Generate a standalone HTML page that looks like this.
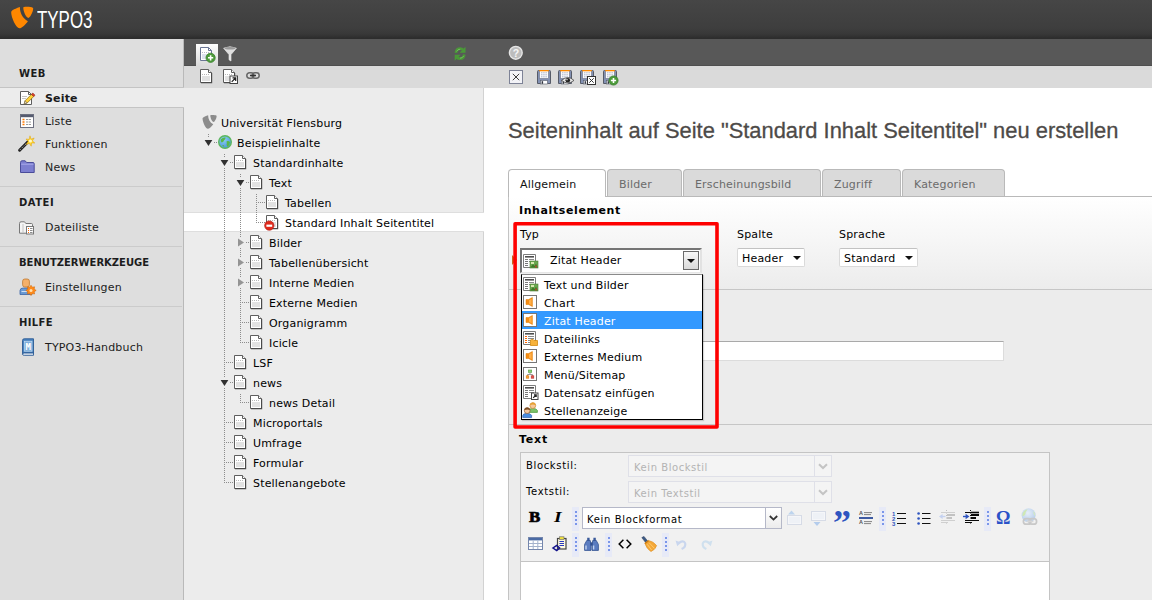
<!DOCTYPE html>
<html lang="de">
<head>
<meta charset="utf-8">
<title>TYPO3</title>
<style>
html,body{margin:0;padding:0;}
body{width:1152px;height:600px;overflow:hidden;position:relative;background:#ececec;font-family:"DejaVu Sans","Liberation Sans",sans-serif;font-size:11px;color:#000;letter-spacing:.17px;}
.abs{position:absolute;}
svg{overflow:visible;display:block;}
#topbar{left:0;top:0;width:1152px;height:39px;background:linear-gradient(#464646,#3e3e3e 28px,#383838 34px,#2d2d2d 38px);}
#logotxt{left:37px;top:5px;font-family:"Liberation Sans",sans-serif;font-size:23px;line-height:30px;color:#fff;transform:scaleX(.735);transform-origin:0 0;letter-spacing:0;}
#menu{left:0;top:39px;width:183px;height:561px;background:#dedede;border-right:1px solid #b9b9b9;}
.mh{left:19px;font-weight:bold;font-size:10px;line-height:12px;color:#1c1c1c;text-transform:uppercase;letter-spacing:.5px;}
.mi{left:45px;line-height:14px;color:#1c1c1c;white-space:nowrap;}
.sep{left:0;width:182px;height:1px;background:#cbcbcb;}
#seite{left:0;top:87px;width:184px;height:21px;background:#ececec;border-top:1px solid #c4c4c4;border-bottom:1px solid #c4c4c4;box-sizing:border-box;}
#dark{left:184px;top:39px;width:968px;height:27px;background:#585858;box-sizing:border-box;border-bottom:1px solid #4e4e4e;}
#light{left:184px;top:66px;width:968px;height:22px;background:#dadada;}
#tree{left:184px;top:88px;width:299px;height:512px;background:#ececec;border-right:1px solid #d2d2d2;}
.tr{white-space:nowrap;line-height:14px;color:#000;}
.vl{width:1px;background:repeating-linear-gradient(#8c8c8c 0 1px,transparent 1px 2px);}
.hl{height:1px;background:repeating-linear-gradient(90deg,#8c8c8c 0 1px,transparent 1px 2px);}
.ad{width:0;height:0;border-left:3.5px solid transparent;border-right:3.5px solid transparent;border-top:6px solid #2e2e2e;}
.ar{width:0;height:0;border-top:3.5px solid transparent;border-bottom:3.5px solid transparent;border-left:5.5px solid #8e8e8e;}
#content{left:484px;top:88px;width:668px;height:512px;background:#fff;}
#title{left:508px;top:116px;font-family:"Liberation Sans",sans-serif;font-size:22.8px;line-height:28px;color:#4d4a48;white-space:nowrap;letter-spacing:0;transform:scaleX(0.9599);transform-origin:0 0;-webkit-text-stroke:.3px #4d4a48;}
.tab{top:169px;height:27px;box-sizing:border-box;border:1px solid #b9b9b9;border-bottom:none;border-radius:4px 4px 0 0;background:#dadada;color:#6b6b6b;line-height:14px;padding:8px 0 0 11px;}
.tab.on{background:#fff;color:#111;height:28px;}
#panel{left:508px;top:196px;width:644px;height:404px;border-top:1px solid #b9b9b9;border-left:1px solid #c4c4c4;background:#ececec;box-sizing:border-box;}
#grad{left:509px;top:197px;width:643px;height:92px;background:linear-gradient(#fff,#ececec);border-bottom:1px solid #c6c6c6;}
.lbl{line-height:14px;color:#000;white-space:nowrap;}
.sel{top:248px;height:19px;box-sizing:border-box;border:1px solid #dadada;border-top-color:#c2c2c2;border-radius:2px;background:#fff;line-height:14px;padding:3px 0 0 4px;color:#000;}
.arr{width:0;height:0;border-left:4px solid transparent;border-right:4px solid transparent;border-top:4px solid #111;}
.opt{left:522px;width:180px;height:18px;line-height:18px;color:#000;white-space:nowrap;box-sizing:border-box;padding:3px 0 0 22px;line-height:16px;}
.dsel{left:628px;width:204px;height:22px;box-sizing:border-box;border:1px solid #dfe0e8;background:#f4f4f4;color:#b3b3b3;font-size:10px;line-height:12px;padding:6px 0 0 5px;letter-spacing:.55px;}
.dtrig{left:814px;width:18px;height:22px;box-sizing:border-box;border:1px solid #dfe0e8;background:#f4f4f4;}
.rsep{width:7px;height:24px;background:#e7eaf7;}
.rsep i{position:absolute;left:3px;width:2px;height:2px;background:#7a96ea;}
.s10{font-size:10px;line-height:12px;letter-spacing:.65px;}
</style>
</head>
<body>
<svg width="0" height="0" style="position:absolute"><defs><g id="pg"><path d="M0.5,0.5H8.5L11.5,3.5V13.5H0.5Z" fill="#fff" stroke="#5e5e5e"/><path d="M8.5,0.5V3.5H11.5" fill="#fff" stroke="#5e5e5e"/><path d="M11.6,4V13.6H1" fill="none" stroke="#4a4a4a" stroke-width="1.2"/><path d="M2,5.5H10" stroke="#b8b8b8" stroke-dasharray="1 1"/><rect x="2" y="7" width="8" height="5" fill="#e2e2e2"/></g></defs></svg>

<div id="topbar" class="abs"></div>
<svg class="abs" style="left:0px;top:0px" width="40" height="38" viewBox="0 0 40 38" ><path d="M11.2,12.6C11.2,10.6 13,9.6 19.9,7.1C19.8,13 22.6,18.4 27.9,21.2C25,25 21.6,28.3 19.5,28.3C16,28.3 11.2,17.4 11.2,12.6Z" fill="#ff8700"/><path d="M23.3,7.2C26,6.6 31,6.8 33.1,7.9C33.6,10 31,16.6 28.4,17.9C26,17.6 23.1,11 23.3,7.2Z" fill="#ff8700"/></svg>
<div id="logotxt" class="abs">TYPO3</div>
<div id="menu" class="abs"></div><div id="seite" class="abs"></div>
<div class="abs mh" style="top:68px;letter-spacing:0.4px">Web</div>
<div class="abs mi" style="top:92px;font-weight:bold">Seite</div>
<div class="abs mi" style="top:115px">Liste</div>
<div class="abs mi" style="top:138px">Funktionen</div>
<div class="abs mi" style="top:161px">News</div>
<div class="abs sep" style="top:186px"></div>
<div class="abs mh" style="top:197px;letter-spacing:0.5px">Datei</div>
<div class="abs mi" style="top:221px">Dateiliste</div>
<div class="abs sep" style="top:246px"></div>
<div class="abs mh" style="top:257px;letter-spacing:0px">Benutzerwerkzeuge</div>
<div class="abs mi" style="top:281px">Einstellungen</div>
<div class="abs sep" style="top:306px"></div>
<div class="abs mh" style="top:317px;letter-spacing:0.35px">Hilfe</div>
<div class="abs mi" style="top:341px">TYPO3-Handbuch</div>
<svg class="abs" style="left:20px;top:91px" width="16" height="15" viewBox="0 0 16 15" ><path d="M.5,.5H8.5L11.5,3.5V13.5H.5Z" fill="#fff" stroke="#5e5e5e"/><path d="M8.5,.5V3.5H11.5" fill="none" stroke="#5e5e5e"/><path d="M2,5.5H7M2,7.5H6" stroke="#c4c4c4"/><path d="M4.2,12.8L5,9.8L11.5,3.3L13.7,5.5L7.2,12Z" fill="#ffd23a" stroke="#8a6a10" stroke-width=".7"/><path d="M11.5,3.3L12.8,2L15,4.2L13.7,5.5Z" fill="#e23a2a" stroke="#8a2a10" stroke-width=".6"/><path d="M4.2,12.8L5,9.8L7.2,12Z" fill="#f3dcae" stroke="#555" stroke-width=".5"/></svg>
<svg class="abs" style="left:20px;top:114px" width="14" height="14" viewBox="0 0 14 14" ><rect x=".5" y=".5" width="13" height="13" fill="#fff" stroke="#6d7080"/><rect x="1" y="1" width="12" height="2.2" fill="#565c70"/><path d="M2.5,5.5H4.5M2.5,8H4.5M2.5,10.5H4.5" stroke="#ff7a00" stroke-width="1.6"/><path d="M6,5.5H11.5M6,8H11.5M6,10.5H11.5" stroke="#9a9a9a" stroke-width="1" stroke-dasharray="2.2 .6"/></svg>
<svg class="abs" style="left:18px;top:135px" width="17" height="17" viewBox="0 0 17 17" ><path d="M1.6,15.2L10.5,6.3" stroke="#222" stroke-width="3" stroke-linecap="round"/><path d="M2,14.8L9.5,7.3" stroke="#bbb" stroke-width="1" stroke-dasharray="1.2 1.2"/><path d="M12,0.8L13,4.2L16.2,3L14.4,5.8L16.8,8L13.6,8L13.2,11.2L11.4,8.4L8.2,9.4L10.2,6.6L8,4L11.2,4.4Z" fill="#ffd633" stroke="#e0a000" stroke-width=".5"/><circle cx="12.4" cy="6" r="1.6" fill="#fff8c8"/></svg>
<svg class="abs" style="left:20px;top:160px" width="15" height="13" viewBox="0 0 15 13" ><path d="M.5,2.5Q.5,.8 2,.8H5.2L6.6,2.5H13Q14.2,2.5 14.2,3.8V12.5H.5Z" fill="#7d7fd0" stroke="#4a4c9a"/><path d="M1.2,4.2H13.5" stroke="#a9abea"/></svg>
<svg class="abs" style="left:19px;top:221px" width="16" height="13" viewBox="0 0 16 13" ><path d="M.5,2.5Q.5,.8 2,.8H5.5L6.8,2.5H12.5Q13.5,2.5 13.5,3.6V12.2H.5Z" fill="#f4f4f4" stroke="#777"/><path d="M4,3V12" stroke="#c4c4c4"/><rect x="7.5" y="5.5" width="7" height="7.5" fill="#fff" stroke="#777"/><path d="M9,7.5H10M9,9.5H10M9,11.5H10" stroke="#f60"/><path d="M11,7.5H13.5M11,9.5H13.5M11,11.5H13.5" stroke="#8a8a8a"/></svg>
<svg class="abs" style="left:19px;top:278px" width="17" height="18" viewBox="0 0 17 18" ><path d="M1,16.5V12.5Q1,10 4.5,10H9.5Q13,10 13,12.5V16.5Z" fill="#6a9ad4" stroke="#3a66a8" stroke-width=".8"/><rect x="3.6" y="1" width="6.8" height="8" rx="2.2" fill="#f4b06a" stroke="#c07a30" stroke-width=".8"/><path d="M2.5,13.5H8" stroke="#cfe0f4"/><path d="M12,8.2L13.3,10.2L15.6,9.8L15.2,12.1L17.2,13.4L15.2,14.7L15.6,17L13.3,16.6L12,18.6L10.7,16.6L8.4,17L8.8,14.7L6.8,13.4L8.8,12.1L8.4,9.8L10.7,10.2Z" fill="#ff8a1a" stroke="#d06400" stroke-width=".5" transform="translate(0,-1)"/><circle cx="12" cy="12.4" r="1.5" fill="#ffe0b0"/></svg>
<svg class="abs" style="left:21px;top:338px" width="14" height="18" viewBox="0 0 14 18" ><path d="M1.5,2.5Q1.5,.8 3.2,.8H12.5V15H3.2Q1.5,15 1.5,16.2Z" fill="#4a84c0" stroke="#2a5a94" stroke-width=".9"/><path d="M1.5,16.2Q1.5,17.3 3.2,17.3H12.5V15H3.2Q1.5,15 1.5,16.2Z" fill="#e8eef6" stroke="#2a5a94" stroke-width=".9"/><rect x="3.6" y="3.2" width="7.4" height="10" fill="#7fb0dc" stroke="#d4e6f6" stroke-width=".6"/><text x="7.3" y="11.6" text-anchor="middle" font-family="DejaVu Sans Mono,Liberation Mono,monospace" font-size="9" font-weight="bold" fill="#fff" letter-spacing="0">M</text></svg>
<div id="dark" class="abs"></div><div id="light" class="abs"></div>
<div class="abs" style="left:196px;top:44px;width:22px;height:22px;background:linear-gradient(#fdfdfd,#dadada)"></div>
<svg class="abs" style="left:200px;top:47px" width="16" height="16" viewBox="0 0 16 16" ><path d="M.5,.5H8.5L11.5,3.5V13.5H.5Z" fill="#fff" stroke="#6a7594"/><path d="M8.5,.5V3.5H11.5" fill="none" stroke="#6a7594"/><path d="M2,5.5H9" stroke="#b8b8c8" stroke-dasharray="1 1"/><rect x="2" y="7" width="6" height="5" fill="#dde1ee"/><circle cx="10.6" cy="10.8" r="4.6" fill="#4c9a3a" stroke="#3b8230" stroke-width=".8"/><path d="M8.0,10.8H13.2M10.6,8.200000000000001V13.4" stroke="#fff" stroke-width="1.6"/></svg>
<svg class="abs" style="left:223px;top:46px" width="14" height="16" viewBox="0 0 14 16" ><path d="M.6,2.2Q7,-.8 13.4,2.2L8,8.6V15L6,13.8V8.6Z" fill="#dedede" stroke="#f4f4f4" stroke-width=".6"/><ellipse cx="7" cy="2.2" rx="5.6" ry="1.3" fill="#9a9a9a"/></svg>
<svg class="abs" style="left:454px;top:46px" width="12" height="16" viewBox="0 0 12 16" ><g id="ra"><path d="M1.9,6.9Q2.4,2.7 6.2,2.7Q8,2.7 9.2,3.9" stroke="#4a9838" stroke-width="2.7" fill="none"/><path d="M11.5,.7V6.7H5.6Z" fill="#4a9838"/><path d="M2.6,5.4Q3.6,3.2 6.2,3.2" stroke="#78be64" stroke-width=".9" fill="none"/></g><use href="#ra" transform="rotate(180 6.1 7.7)"/></svg>
<svg class="abs" style="left:508px;top:45px" width="16" height="16" viewBox="0 0 16 16" ><circle cx="7.8" cy="7.8" r="6.4" fill="#bdbdbd" stroke="#e6e6e6" stroke-width="1.4"/><text x="7.9" y="11.6" text-anchor="middle" font-family="Liberation Sans,sans-serif" font-size="10.5" font-weight="bold" fill="#f6f6f6" letter-spacing="0">?</text></svg>
<svg class="abs" style="left:200px;top:69px" width="12" height="14" viewBox="0 0 12 14" ><use href="#pg"/></svg>
<svg class="abs" style="left:223px;top:69px" width="16" height="16" viewBox="0 0 16 16" ><use href="#pg"/><rect x="7.0" y="7.0" width="7.5" height="7.5" fill="#fff" stroke="#444"/><path d="M8.7,12.8L12.5,9.0M9.5,8.8H12.7V12.0" fill="none" stroke="#222" stroke-width="1.2"/></svg>
<svg class="abs" style="left:246px;top:72px" width="14" height="7" viewBox="0 0 14 7" ><rect x=".8" y=".8" width="7" height="5.4" rx="2.7" fill="none" stroke="#666" stroke-width="1.5"/><rect x="6.2" y=".8" width="7" height="5.4" rx="2.7" fill="none" stroke="#666" stroke-width="1.5"/><path d="M4,3.5H10" stroke="#333" stroke-width="1.5"/></svg>
<svg class="abs" style="left:509px;top:70px" width="14" height="14" viewBox="0 0 14 14" ><rect x=".5" y=".5" width="13" height="13" fill="#f3f3f7" stroke="#7d8296"/><path d="M3.8,3.8L10.2,10.2M10.2,3.8L3.8,10.2" stroke="#333" stroke-width=".95"/></svg>
<svg class="abs" style="left:537px;top:70px" width="14" height="14" viewBox="0 0 14 14" ><path d="M0.5,1.5Q0.5,0.5 1.5,0.5H12.5Q13.5,0.5 13.5,1.5V13.5H0.5Z" fill="#8391b3" stroke="#565b68"/><rect x="2.5" y="0.5" width="9" height="8" fill="#fbfbfd" stroke="#6a7186" stroke-width=".6"/><rect x="2.2" y="0" width="9.6" height="1.3" fill="#ff8a00"/><path d="M4,2.8H10M4,4.8H10M4,6.8H10" stroke="#a9b1c6" stroke-dasharray="1.5 .7"/><rect x="3.5" y="10.5" width="7" height="3.5" fill="#fff" stroke="#565b68" stroke-width=".6"/><rect x="4.6" y="11.2" width="1.5" height="2.6" fill="#30343f"/></svg>
<svg class="abs" style="left:558px;top:70px" width="16" height="14" viewBox="0 0 16 14" ><path d="M0.5,1.5Q0.5,0.5 1.5,0.5H12.5Q13.5,0.5 13.5,1.5V13.5H0.5Z" fill="#8391b3" stroke="#565b68"/><rect x="2.5" y="0.5" width="9" height="8" fill="#fbfbfd" stroke="#6a7186" stroke-width=".6"/><rect x="2.2" y="0" width="9.6" height="1.3" fill="#ff8a00"/><path d="M4,2.8H10M4,4.8H10M4,6.8H10" stroke="#a9b1c6" stroke-dasharray="1.5 .7"/><rect x="3.5" y="10.5" width="7" height="3.5" fill="#fff" stroke="#565b68" stroke-width=".6"/><rect x="4.6" y="11.2" width="1.5" height="2.6" fill="#30343f"/><path d="M3.6,10.4Q9.8,4.6 16,10.4Q9.8,15.6 3.6,10.4Z" fill="#e8e8e8" stroke="#444" stroke-width=".8"/><circle cx="9.8" cy="10.3" r="2.3" fill="#222"/><circle cx="9" cy="9.6" r=".8" fill="#ccc"/></svg>
<svg class="abs" style="left:580px;top:70px" width="16" height="15" viewBox="0 0 16 15" ><path d="M0.5,1.5Q0.5,0.5 1.5,0.5H12.5Q13.5,0.5 13.5,1.5V13.5H0.5Z" fill="#8391b3" stroke="#565b68"/><rect x="2.5" y="0.5" width="9" height="8" fill="#fbfbfd" stroke="#6a7186" stroke-width=".6"/><rect x="2.2" y="0" width="9.6" height="1.3" fill="#ff8a00"/><path d="M4,2.8H10M4,4.8H10M4,6.8H10" stroke="#a9b1c6" stroke-dasharray="1.5 .7"/><rect x="3.5" y="10.5" width="7" height="3.5" fill="#fff" stroke="#565b68" stroke-width=".6"/><rect x="4.6" y="11.2" width="1.5" height="2.6" fill="#30343f"/><rect x="7.5" y="6.5" width="8" height="8" fill="#fff" stroke="#333"/><path d="M9.3,8.3L13.7,12.7M13.7,8.3L9.3,12.7" stroke="#333" stroke-width="1"/></svg>
<svg class="abs" style="left:603px;top:70px" width="16" height="15" viewBox="0 0 16 15" ><path d="M0.5,1.5Q0.5,0.5 1.5,0.5H12.5Q13.5,0.5 13.5,1.5V13.5H0.5Z" fill="#8391b3" stroke="#565b68"/><rect x="2.5" y="0.5" width="9" height="8" fill="#fbfbfd" stroke="#6a7186" stroke-width=".6"/><rect x="2.2" y="0" width="9.6" height="1.3" fill="#ff8a00"/><path d="M4,2.8H10M4,4.8H10M4,6.8H10" stroke="#a9b1c6" stroke-dasharray="1.5 .7"/><rect x="3.5" y="10.5" width="7" height="3.5" fill="#fff" stroke="#565b68" stroke-width=".6"/><rect x="4.6" y="11.2" width="1.5" height="2.6" fill="#30343f"/><circle cx="10.5" cy="10.5" r="4.6" fill="#4c9a3a" stroke="#3b8230" stroke-width=".8"/><path d="M7.9,10.5H13.1M10.5,7.9V13.1" stroke="#fff" stroke-width="1.6"/></svg>
<div id="tree" class="abs"></div>
<div class="abs" style="left:184px;top:212px;width:300px;height:20px;background:#fff;border-top:1px solid #dedede;border-bottom:1px solid #dedede;box-sizing:border-box"></div>
<div class="abs vl" style="left:208px;top:134px;height:4px"></div>
<div class="abs hl" style="left:214px;top:142px;width:3px"></div>
<div class="abs vl" style="left:224px;top:154px;height:4px"></div>
<div class="abs vl" style="left:224px;top:168px;height:210px"></div>
<div class="abs vl" style="left:224px;top:388px;height:95px"></div>
<div class="abs vl" style="left:240px;top:174px;height:4px"></div>
<div class="abs vl" style="left:240px;top:188px;height:50px"></div>
<div class="abs vl" style="left:240px;top:248px;height:10px"></div>
<div class="abs vl" style="left:240px;top:268px;height:10px"></div>
<div class="abs vl" style="left:240px;top:288px;height:55px"></div>
<div class="abs vl" style="left:240px;top:394px;height:9px"></div>
<div class="abs vl" style="left:256px;top:194px;height:29px"></div>
<div class="abs tr" style="left:221px;top:117px">Universität Flensburg</div>
<div class="abs tr" style="left:237px;top:137px">Beispielinhalte</div>
<svg class="abs" style="left:204px;top:139px" width="9" height="8" viewBox="0 0 9 8" ><path d="M.6,.9H8.3L4.5,7Z" fill="#303030"/></svg>
<svg class="abs" style="left:220px;top:159px" width="9" height="8" viewBox="0 0 9 8" ><path d="M.6,.9H8.3L4.5,7Z" fill="#303030"/></svg>
<div class="abs hl" style="left:230px;top:162px;width:3px"></div>
<svg class="abs" style="left:234px;top:155px" width="12" height="14" viewBox="0 0 12 14" ><use href="#pg"/></svg>
<div class="abs tr" style="left:253px;top:157px">Standardinhalte</div>
<svg class="abs" style="left:236px;top:179px" width="9" height="8" viewBox="0 0 9 8" ><path d="M.6,.9H8.3L4.5,7Z" fill="#303030"/></svg>
<div class="abs hl" style="left:246px;top:182px;width:3px"></div>
<svg class="abs" style="left:250px;top:175px" width="12" height="14" viewBox="0 0 12 14" ><use href="#pg"/></svg>
<div class="abs tr" style="left:269px;top:177px">Text</div>
<div class="abs hl" style="left:256px;top:202px;width:9px"></div>
<svg class="abs" style="left:266px;top:195px" width="12" height="14" viewBox="0 0 12 14" ><use href="#pg"/></svg>
<div class="abs tr" style="left:285px;top:197px">Tabellen</div>
<div class="abs hl" style="left:256px;top:222px;width:9px"></div>
<svg class="abs" style="left:266px;top:215px" width="12" height="14" viewBox="0 0 12 14" ><use href="#pg"/></svg>
<div class="abs tr" style="left:285px;top:217px">Standard Inhalt Seitentitel</div>
<svg class="abs" style="left:238px;top:238px" width="7" height="9" viewBox="0 0 7 9" ><path d="M0,.4L6,4.5L0,8.6Z" fill="#949494"/></svg>
<div class="abs hl" style="left:246px;top:242px;width:3px"></div>
<svg class="abs" style="left:250px;top:235px" width="12" height="14" viewBox="0 0 12 14" ><use href="#pg"/></svg>
<div class="abs tr" style="left:269px;top:237px">Bilder</div>
<svg class="abs" style="left:238px;top:258px" width="7" height="9" viewBox="0 0 7 9" ><path d="M0,.4L6,4.5L0,8.6Z" fill="#949494"/></svg>
<div class="abs hl" style="left:246px;top:262px;width:3px"></div>
<svg class="abs" style="left:250px;top:255px" width="12" height="14" viewBox="0 0 12 14" ><use href="#pg"/></svg>
<div class="abs tr" style="left:269px;top:257px">Tabellenübersicht</div>
<svg class="abs" style="left:238px;top:278px" width="7" height="9" viewBox="0 0 7 9" ><path d="M0,.4L6,4.5L0,8.6Z" fill="#949494"/></svg>
<div class="abs hl" style="left:246px;top:282px;width:3px"></div>
<svg class="abs" style="left:250px;top:275px" width="12" height="14" viewBox="0 0 12 14" ><use href="#pg"/></svg>
<div class="abs tr" style="left:269px;top:277px">Interne Medien</div>
<div class="abs hl" style="left:240px;top:302px;width:9px"></div>
<svg class="abs" style="left:250px;top:295px" width="12" height="14" viewBox="0 0 12 14" ><use href="#pg"/></svg>
<div class="abs tr" style="left:269px;top:297px">Externe Medien</div>
<div class="abs hl" style="left:240px;top:322px;width:9px"></div>
<svg class="abs" style="left:250px;top:315px" width="12" height="14" viewBox="0 0 12 14" ><use href="#pg"/></svg>
<div class="abs tr" style="left:269px;top:317px">Organigramm</div>
<div class="abs hl" style="left:240px;top:342px;width:9px"></div>
<svg class="abs" style="left:250px;top:335px" width="12" height="14" viewBox="0 0 12 14" ><use href="#pg"/></svg>
<div class="abs tr" style="left:269px;top:337px">Icicle</div>
<div class="abs hl" style="left:224px;top:362px;width:9px"></div>
<svg class="abs" style="left:234px;top:355px" width="12" height="14" viewBox="0 0 12 14" ><use href="#pg"/></svg>
<div class="abs tr" style="left:253px;top:357px">LSF</div>
<svg class="abs" style="left:220px;top:379px" width="9" height="8" viewBox="0 0 9 8" ><path d="M.6,.9H8.3L4.5,7Z" fill="#303030"/></svg>
<div class="abs hl" style="left:230px;top:382px;width:3px"></div>
<svg class="abs" style="left:234px;top:375px" width="12" height="14" viewBox="0 0 12 14" ><use href="#pg"/></svg>
<div class="abs tr" style="left:253px;top:377px">news</div>
<div class="abs hl" style="left:240px;top:402px;width:9px"></div>
<svg class="abs" style="left:250px;top:395px" width="12" height="14" viewBox="0 0 12 14" ><use href="#pg"/></svg>
<div class="abs tr" style="left:269px;top:397px">news Detail</div>
<div class="abs hl" style="left:224px;top:422px;width:9px"></div>
<svg class="abs" style="left:234px;top:415px" width="12" height="14" viewBox="0 0 12 14" ><use href="#pg"/></svg>
<div class="abs tr" style="left:253px;top:417px">Microportals</div>
<div class="abs hl" style="left:224px;top:442px;width:9px"></div>
<svg class="abs" style="left:234px;top:435px" width="12" height="14" viewBox="0 0 12 14" ><use href="#pg"/></svg>
<div class="abs tr" style="left:253px;top:437px">Umfrage</div>
<div class="abs hl" style="left:224px;top:462px;width:9px"></div>
<svg class="abs" style="left:234px;top:455px" width="12" height="14" viewBox="0 0 12 14" ><use href="#pg"/></svg>
<div class="abs tr" style="left:253px;top:457px">Formular</div>
<div class="abs hl" style="left:224px;top:482px;width:9px"></div>
<svg class="abs" style="left:234px;top:475px" width="12" height="14" viewBox="0 0 12 14" ><use href="#pg"/></svg>
<div class="abs tr" style="left:253px;top:477px">Stellenangebote</div>
<svg class="abs" style="left:201px;top:114px" width="16" height="16" viewBox="0 0 16 16" ><g transform="translate(-5.6,-3.4) scale(.64)" fill="#8c8c8c"><path d="M11.2,12.6C11.2,10.6 13,9.6 19.9,7.1C19.8,13 22.6,18.4 27.9,21.2C25,25 21.6,28.3 19.5,28.3C16,28.3 11.2,17.4 11.2,12.6Z"/><path d="M23.3,7.2C26,6.6 31,6.8 33.1,7.9C33.6,10 31,16.6 28.4,17.9C26,17.6 23.1,11 23.3,7.2Z"/></g></svg>
<svg class="abs" style="left:218px;top:135px" width="14" height="14" viewBox="0 0 14 14" ><defs><radialGradient id="gg" cx=".4" cy=".3" r=".8"><stop offset="0" stop-color="#8fd0f4"/><stop offset="1" stop-color="#3f8fd8"/></radialGradient></defs><circle cx="7" cy="7" r="6.3" fill="url(#gg)" stroke="#5cb85c" stroke-width="1.4"/><path d="M3,4.2Q5,2 7.6,2.6Q7.8,4.4 6,5.4Q5.4,7.4 3.6,7.6Q2.2,6 3,4.2Z" fill="#58b848"/><path d="M8.6,6.2Q10.8,5.4 12,7.2Q11.8,10.4 9.4,11.8Q8,10.2 8.8,8.6Z" fill="#58b848"/><path d="M4.2,10.2Q5.6,9.6 6.4,11.2Q5.4,12.2 4.2,10.2Z" fill="#58b848"/></svg>
<svg class="abs" style="left:264px;top:220px" width="11" height="11" viewBox="0 0 11 11" ><circle cx="5.3" cy="5.6" r="4.7" fill="#e02a1c" stroke="#b01810" stroke-width=".6"/><rect x="2.4" y="4.6" width="5.8" height="2.2" fill="#fff"/></svg>
<div id="content" class="abs"></div>
<div id="title" class="abs">Seiteninhalt auf Seite "Standard Inhalt Seitentitel" neu erstellen</div>
<div id="panel" class="abs"></div>
<div id="grad" class="abs"></div>
<div class="abs tab on" style="left:508px;width:98px">Allgemein</div>
<div class="abs tab" style="left:607px;width:75px">Bilder</div>
<div class="abs tab" style="left:683px;width:138px">Erscheinungsbild</div>
<div class="abs tab" style="left:822px;width:79px">Zugriff</div>
<div class="abs tab" style="left:902px;width:103px">Kategorien</div>
<div class="abs lbl" style="left:519px;top:204px;font-weight:bold;letter-spacing:.6px">Inhaltselement</div>
<div class="abs lbl" style="left:520px;top:228px">Typ</div>
<div class="abs lbl" style="left:737px;top:228px">Spalte</div>
<div class="abs lbl" style="left:839px;top:228px">Sprache</div>
<div class="abs sel" style="left:737px;width:68px">Header</div>
<div class="abs arr" style="left:793px;top:256px"></div>
<div class="abs sel" style="left:839px;width:79px">Standard</div>
<div class="abs arr" style="left:905px;top:256px"></div>
<div class="abs" style="left:520px;top:341px;width:484px;height:20px;box-sizing:border-box;background:#fff;border:1px solid #dcdcdc;border-top-color:#a9a9a9"></div>
<div class="abs" style="left:509px;top:424px;width:643px;height:1px;background:#c6c6c6"></div>
<div class="abs" style="left:512px;top:255px;width:0;height:0;border-top:5px solid transparent;border-bottom:5px solid transparent;border-left:5px solid #c8641e"></div>
<svg class="abs" style="left:0;top:0" width="1152" height="600"><rect x="515.1" y="223.8" width="201.9" height="203.2" fill="none" stroke="#fe0000" stroke-width="3.6" stroke-linejoin="round"/></svg>
<div class="abs" style="left:520px;top:248px;width:182px;height:25px;box-sizing:border-box;background:#fff;border:2px solid #e2e2e2;border-top-color:#757575;border-left-color:#757575;border-bottom:1px solid #e6e6e6"></div>
<div class="abs lbl" style="left:550px;top:254px">Zitat Header</div>
<div class="abs" style="left:683px;top:251px;width:16px;height:19px;box-sizing:border-box;border:1px solid #6a6a6a;background:linear-gradient(#f8f8f8,#dadada)"></div>
<div class="abs arr" style="left:687px;top:259px"></div>
<div class="abs" style="left:521px;top:274px;width:182px;height:146px;box-sizing:border-box;background:#fff;border:1px solid #000;border-top-color:#8a8a8a;box-shadow:1px 1px 1px rgba(0,0,0,.15)"></div>
<div class="abs opt" style="top:275px">Text und Bilder</div>
<div class="abs opt" style="top:293px">Chart</div>
<div class="abs opt" style="top:311px;background:#3399ff;color:#fff">Zitat Header</div>
<div class="abs opt" style="top:329px">Dateilinks</div>
<div class="abs opt" style="top:347px">Externes Medium</div>
<div class="abs opt" style="top:365px">Menü/Sitemap</div>
<div class="abs opt" style="top:383px">Datensatz einfügen</div>
<div class="abs opt" style="top:401px">Stellenanzeige</div>

<svg class="abs" style="left:523px;top:254px" width="16" height="15" viewBox="0 0 16 15" ><path d="M.5,.5H12.5V13.5H.5Z" fill="#fff" stroke="#7c7c7c"/><rect x="2" y="2" width="9" height="1.6" fill="#4f4f4f"/><path d="M2,5.5H5M2,7.5H5M2,9.5H5M2,11.5H5" stroke="#777" stroke-width="1"/><path d="M6,5.5H11M6,7.5H11" stroke="#8a8a8a" stroke-width="1"/><rect x="7" y="7" width="8" height="7" fill="#6aa84f" stroke="#4f7f35" stroke-width=".6"/><path d="M7.5,13.5L10,10L11.5,12L13,9.5L14.7,13.5Z" fill="#3f7a28"/><rect x="8" y="8" width="3" height="2" fill="#d8e8b0"/><rect x="12" y="11.5" width="2" height="2" fill="#a0522d"/></svg>
<svg class="abs" style="left:523px;top:277px" width="16" height="15" viewBox="0 0 16 15" ><path d="M.5,.5H12.5V13.5H.5Z" fill="#fff" stroke="#7c7c7c"/><rect x="2" y="2" width="9" height="1.6" fill="#4f4f4f"/><path d="M2,5.5H5M2,7.5H5M2,9.5H5M2,11.5H5" stroke="#777" stroke-width="1"/><path d="M6,5.5H11M6,7.5H11" stroke="#8a8a8a" stroke-width="1"/><rect x="7" y="7" width="8" height="7" fill="#6aa84f" stroke="#4f7f35" stroke-width=".6"/><path d="M7.5,13.5L10,10L11.5,12L13,9.5L14.7,13.5Z" fill="#3f7a28"/><rect x="8" y="8" width="3" height="2" fill="#d8e8b0"/><rect x="12" y="11.5" width="2" height="2" fill="#a0522d"/></svg>
<svg class="abs" style="left:523px;top:295px" width="14" height="14" viewBox="0 0 14 14" ><rect x=".5" y=".5" width="13" height="13" fill="#fff" stroke="#777"/><path d="M3,4.5H5.6L9.4,2.4V11.6L5.6,9.5H3Z" fill="#f48c14" stroke="#e07c00" stroke-width=".5"/><path d="M6,5.2L8.6,3.8V10.2L6,8.8Z" fill="#ffb04a"/></svg>
<svg class="abs" style="left:523px;top:313px" width="14" height="14" viewBox="0 0 14 14" ><rect x=".5" y=".5" width="13" height="13" fill="#fff" stroke="#777"/><path d="M3,4.5H5.6L9.4,2.4V11.6L5.6,9.5H3Z" fill="#f48c14" stroke="#e07c00" stroke-width=".5"/><path d="M6,5.2L8.6,3.8V10.2L6,8.8Z" fill="#ffb04a"/></svg>
<svg class="abs" style="left:523px;top:331px" width="16" height="15" viewBox="0 0 16 15" ><path d="M.5,.5H12.5V13.5H.5Z" fill="#fff" stroke="#7c7c7c"/><rect x="2" y="2" width="9" height="1.6" fill="#4f4f4f"/><path d="M2,5.5H4M2,7.5H4M2,9.5H4M2,11.5H4" stroke="#f60" stroke-width="1"/><path d="M5,5.5H11M5,7.5H11M5,9.5H8M5,11.5H7" stroke="#8a8a8a" stroke-width="1"/><path d="M7.5,9.5Q7.5,8.5 8.5,8.5H10.2L11,9.5H14.5V14.5H7.5Z" fill="#f7b23a" stroke="#d48a10" stroke-width=".8"/></svg>
<svg class="abs" style="left:523px;top:349px" width="14" height="14" viewBox="0 0 14 14" ><rect x=".5" y=".5" width="13" height="13" fill="#fff" stroke="#777"/><path d="M3,4.5H5.6L9.4,2.4V11.6L5.6,9.5H3Z" fill="#f48c14" stroke="#e07c00" stroke-width=".5"/><path d="M6,5.2L8.6,3.8V10.2L6,8.8Z" fill="#ffb04a"/></svg>
<svg class="abs" style="left:523px;top:367px" width="14" height="14" viewBox="0 0 14 14" ><rect x=".5" y=".5" width="13" height="13" fill="#fff" stroke="#777"/><path d="M7,5.5V7.5M4.5,9V7.5H9.5V9" fill="none" stroke="#999"/><rect x="5.3" y="3" width="3.4" height="2.4" fill="#8ccc7a" stroke="#58a446" stroke-width=".6"/><rect x="3.2" y="8.8" width="2.6" height="2.4" fill="#f9a03a" stroke="#dc7c0c" stroke-width=".6"/><rect x="8.2" y="8.8" width="2.6" height="2.4" fill="#e6564c" stroke="#b8302a" stroke-width=".6"/></svg>
<svg class="abs" style="left:523px;top:385px" width="16" height="15" viewBox="0 0 16 15" ><path d="M.5,.5H12.5V13.5H.5Z" fill="#fff" stroke="#7c7c7c"/><rect x="2" y="2" width="9" height="1.6" fill="#4f4f4f"/><path d="M2,5.5H5M2,7.5H5M2,9.5H5M2,11.5H5" stroke="#777" stroke-width="1"/><path d="M6,5.5H11M6,7.5H11" stroke="#8a8a8a" stroke-width="1"/><rect x="8.5" y="8.0" width="6.5" height="6.5" fill="#fff" stroke="#444"/><path d="M10.2,12.8L13.0,10.0M11,9.8H13.2V12.0" fill="none" stroke="#222" stroke-width="1.2"/></svg>
<svg class="abs" style="left:522px;top:402px" width="17" height="16" viewBox="0 0 17 16" ><path d="M7.2,10.4V8.6Q7.2,6.4 10.6,6.4Q14.6,6.4 15.4,8.4V10.4Z" fill="#7cc26a" stroke="#4c9a3a" stroke-width=".7"/><circle cx="10.8" cy="3.6" r="2.9" fill="#f6c89a" stroke="#c8862e" stroke-width=".7"/><path d="M7.9,3.2Q8.4,.4 10.8,.5Q13.4,.4 13.7,3.2Q11,1.6 7.9,3.2Z" fill="#e8a030"/><path d="M.8,15.6V13.6Q.8,11.4 4.8,11.4Q9,11.4 9.6,13.4V15.6Z" fill="#4a8ee0" stroke="#2a5eb0" stroke-width=".7"/><circle cx="5.2" cy="8.6" r="2.9" fill="#f4c8a0" stroke="#8a5a30" stroke-width=".7"/><path d="M2.3,8.2Q2.6,5.4 5.2,5.5Q7.8,5.4 8.1,8.2Q5.4,6.6 2.3,8.2Z" fill="#7a4a20"/></svg>
<div class="abs lbl" style="left:519px;top:433px;font-weight:bold;letter-spacing:.8px">Text</div>
<div class="abs" style="left:520px;top:452px;width:530px;height:148px;box-sizing:border-box;background:#f1f1f1;border:1px solid #c4c4c4"></div>
<div class="abs lbl s10" style="left:526px;top:460px">Blockstil:</div>
<div class="abs lbl s10" style="left:526px;top:486px">Textstil:</div>
<div class="abs dsel" style="top:455px">Kein Blockstil</div>
<div class="abs dtrig" style="top:455px"></div>
<div class="abs dsel" style="top:481px">Kein Textstil</div>
<div class="abs dtrig" style="top:481px"></div>
<div class="abs s10" style="left:582px;top:507px;width:200px;height:22px;box-sizing:border-box;background:#fff;border:1px solid #b5b8c8;padding:6px 0 0 4px;color:#000">Kein Blockformat</div>
<div class="abs" style="left:765px;top:507px;width:17px;height:22px;box-sizing:border-box;border:1px solid #b5b8c8;background:linear-gradient(#fff,#ececec)"></div>
<div class="abs" style="left:521px;top:561px;width:528px;height:39px;background:#fff;border-top:1px solid #c4c4c4"></div>

<svg class="abs" style="left:818px;top:463px" width="10" height="7" viewBox="0 0 10 7" ><path d="M1,1.2L5,5L9,1.2" fill="none" stroke="#c4c4c4" stroke-width="2"/></svg>
<svg class="abs" style="left:818px;top:489px" width="10" height="7" viewBox="0 0 10 7" ><path d="M1,1.2L5,5L9,1.2" fill="none" stroke="#c4c4c4" stroke-width="2"/></svg>
<svg class="abs" style="left:769px;top:515px" width="9" height="6" viewBox="0 0 9 6" ><path d="M.8,1L4.5,4.6L8.2,1" fill="none" stroke="#333" stroke-width="1.8"/></svg>
<div class="abs" style="left:529px;top:507px;font:bold 15px/20px 'Liberation Serif',serif;color:#000;letter-spacing:0;-webkit-text-stroke:.7px #000;transform:scaleX(1.12);transform-origin:0 0">B</div>
<div class="abs" style="left:554px;top:507px;font:italic bold 15px/20px 'Liberation Serif',serif;color:#000;letter-spacing:0;transform:scaleX(1.3);transform-origin:0 0">I</div>
<div class="abs rsep" style="left:572px;top:507px"><i style="top:4px"></i><i style="top:8px"></i><i style="top:12px"></i><i style="top:16px"></i></div>
<svg class="abs" style="left:787px;top:510px" width="16" height="16" viewBox="0 0 16 16" ><path d="M4.5,.5L8,4.5H1Z" fill="#bdd4ee"/><rect x=".5" y="5.5" width="14" height="9" fill="#f5f6f9" stroke="#d6dbe6"/><rect x="2" y="7" width="11" height="6" fill="#eef1f6"/></svg>
<svg class="abs" style="left:811px;top:510px" width="16" height="16" viewBox="0 0 16 16" ><rect x=".5" y="1.5" width="14" height="9" fill="#f5f6f9" stroke="#d6dbe6"/><rect x="2" y="3" width="11" height="6" fill="#eef1f6"/><path d="M2.5,12L9.5,12L6,16Z" fill="#b4ccec"/></svg>
<div class="abs" style="left:833px;top:503px;font:bold 36px/40px 'Liberation Serif',serif;color:#2f55c0;letter-spacing:-1px">”</div>
<svg class="abs" style="left:859px;top:511px" width="14" height="14" viewBox="0 0 14 14" ><path d="M5,1.6H13M5,3.6H12M5,10.6H13M5,12.6H12" stroke="#777" stroke-width=".9"/><path d="M0,7H14" stroke="#2a4a9a" stroke-width="1.8"/><text x="0" y="4.2" font-family="Liberation Sans,sans-serif" font-size="5.5" font-weight="bold" fill="#555" letter-spacing="0">A</text><text x="0" y="13.4" font-family="Liberation Sans,sans-serif" font-size="5.5" font-weight="bold" fill="#555" letter-spacing="0">A</text></svg>
<div class="abs rsep" style="left:879px;top:507px"><i style="top:4px"></i><i style="top:8px"></i><i style="top:12px"></i><i style="top:16px"></i></div>
<svg class="abs" style="left:892px;top:511px" width="14" height="14" viewBox="0 0 14 14" ><path d="M5,2.5H14M5,7.5H14M5,12.5H14" stroke="#111" stroke-width="1.15"/><g font-family="Liberation Sans,sans-serif" font-size="6" font-weight="bold" fill="#2f55c0" letter-spacing="0"><text x="0" y="4.6">1</text><text x="0" y="9.6">2</text><text x="0" y="14.6">3</text></g></svg>
<svg class="abs" style="left:917px;top:511px" width="14" height="14" viewBox="0 0 14 14" ><path d="M5,2.5H13.5M5,7.5H13.5M5,12.5H13.5" stroke="#111" stroke-width="1.15"/><circle cx="1.6" cy="2.5" r="1.3" fill="#2f55c0"/><circle cx="1.6" cy="7.5" r="1.3" fill="#2f55c0"/><circle cx="1.6" cy="12.5" r="1.3" fill="#2f55c0"/></svg>
<svg class="abs" style="left:939px;top:510px" width="16" height="16" viewBox="0 0 16 16" ><path d="M7.5,0V15" stroke="#bdbdbd" stroke-dasharray="1 1.5"/><path d="M2,2.5H16M2,10.5H16M2,12.5H9" stroke="#cfcfcf" stroke-width="1"/><path d="M8,5H16M8,8H13" stroke="#c2c2c2" stroke-width="2"/><path d="M0,6.5L3.6,4V9Z" fill="#c5d2f0"/><path d="M3,6.5H6.5" stroke="#c5d2f0" stroke-width="1.4"/></svg>
<svg class="abs" style="left:963px;top:510px" width="16" height="16" viewBox="0 0 16 16" ><path d="M7.5,0V15" stroke="#111" stroke-dasharray="1 1.5"/><path d="M2,2.5H8M2,10.5H16M2,12.5H9" stroke="#0a0a0a" stroke-width="1"/><path d="M8,2.5H16" stroke="#0a0a0a" stroke-width="1.6"/><path d="M8,5H16M8,8H13" stroke="#0a0a0a" stroke-width="2"/><path d="M6.4,6.5L2.6,3.8V9.2Z" fill="#2f55c0"/><path d="M0,6.5H3.5" stroke="#2f55c0" stroke-width="1.4"/></svg>
<div class="abs rsep" style="left:984px;top:507px"><i style="top:4px"></i><i style="top:8px"></i><i style="top:12px"></i><i style="top:16px"></i></div>
<div class="abs" style="left:996px;top:506px;font:bold 18px/24px 'Liberation Serif',serif;color:#2a52c8;letter-spacing:0">Ω</div>
<svg class="abs" style="left:1021px;top:508px" width="17" height="18" viewBox="0 0 17 18" ><defs><radialGradient id="lg" cx=".45" cy=".35" r=".7"><stop offset="0" stop-color="#e6eef8"/><stop offset="1" stop-color="#b2cbea"/></radialGradient></defs><circle cx="7.6" cy="7.2" r="7" fill="url(#lg)"/><path d="M1.6,5.4Q3.4,1.6 6.6,1.2Q4.6,3.4 4.4,6.2Q3,8.4 1.4,8.2Z" fill="#cfe8b4"/><path d="M12.6,3Q14.4,5 14.2,8.4Q13,7 12.4,5Z" fill="#d4eabc"/><rect x="2.4" y="10.6" width="7.6" height="5.6" rx="2.8" fill="none" stroke="#c8c8c8" stroke-width="1.7"/><rect x="8" y="10.6" width="7.6" height="5.6" rx="2.8" fill="none" stroke="#c8c8c8" stroke-width="1.7"/><path d="M5.6,13.4H12.4" stroke="#d6d6d6" stroke-width="1.6"/></svg>
<svg class="abs" style="left:528px;top:537px" width="15" height="13" viewBox="0 0 15 13" ><rect x=".5" y=".5" width="14" height="12" fill="#fff" stroke="#7486ac"/><rect x="1" y="1" width="13" height="2.4" fill="#4a6aa4"/><path d="M1,6.5H14M1,9.5H14M5.2,3.6V12M9.8,3.6V12" stroke="#a4b2cc"/></svg>
<svg class="abs" style="left:552px;top:536px" width="15" height="15" viewBox="0 0 15 15" ><rect x="5.5" y="2.5" width="8.5" height="10.5" fill="#fffbe0" stroke="#444" stroke-width="1.2"/><rect x="7.5" y=".8" width="4.5" height="2.6" fill="#f0e040" stroke="#666" stroke-width=".6"/><path d="M7.4,5.5H12M7.4,7.5H12M7.4,9.5H12" stroke="#2a3ac0" stroke-width="1"/><path d="M5.2,9.2L1,12L5.2,14.8M4.6,9.4L7.6,12L4.6,14.6" fill="none" stroke="#14148c" stroke-width="1.5"/></svg>
<div class="abs rsep" style="left:572px;top:533px"><i style="top:4px"></i><i style="top:8px"></i><i style="top:12px"></i><i style="top:16px"></i></div>
<svg class="abs" style="left:584px;top:537px" width="15" height="14" viewBox="0 0 15 14" ><path d="M3.2,.8H5.6V5H3.2ZM9.4,.8H11.8V5H9.4Z" fill="#3a5a9a"/><path d="M.6,13.4V7.4L2.8,3.4H6.2L7,7.4V13.4ZM8,13.4V7.4L8.8,3.4H12.2L14.4,7.4V13.4Z" fill="#5a7cc0" stroke="#2f4f8f" stroke-width=".8"/><rect x="6.4" y="5.4" width="2.2" height="3.2" fill="#2f4f8f"/><path d="M2,8.4V12.4M9.6,8.4V12.4" stroke="#c4d4f0" stroke-width="1.4"/></svg>
<div class="abs rsep" style="left:605px;top:533px"><i style="top:4px"></i><i style="top:8px"></i><i style="top:12px"></i><i style="top:16px"></i></div>
<svg class="abs" style="left:618px;top:539px" width="14" height="10" viewBox="0 0 14 10" ><path d="M5.4,.8L1.2,5L5.4,9.2M8.6,.8L12.8,5L8.6,9.2" fill="none" stroke="#000" stroke-width="1.5"/></svg>
<svg class="abs" style="left:641px;top:536px" width="16" height="16" viewBox="0 0 16 16" ><path d="M.8,1.6L3,.4L6.6,5L4.6,6.6Z" fill="#3c5a84" stroke="#2a3a5a" stroke-width=".5"/><path d="M3.8,7L7.4,4.4Q12.4,5.4 15.6,9.6Q14.6,13.4 10,15.6Q5.4,12.6 3.8,7Z" fill="#f4a838" stroke="#dc8c1c" stroke-width=".6"/><path d="M6.4,8.4L10.6,14M8.4,7L13.4,12.4" stroke="#ffd07a" stroke-width=".8"/><path d="M4,7.4L7.6,4.8" stroke="#c87a10" stroke-width="1.2"/></svg>
<div class="abs rsep" style="left:662px;top:533px"><i style="top:4px"></i><i style="top:8px"></i><i style="top:12px"></i><i style="top:16px"></i></div>
<svg class="abs" style="left:675px;top:538px" width="13" height="12" viewBox="0 0 13 12" ><path d="M3,5.6Q8.6,1.4 10.2,5.4Q11,9 6.6,11" fill="none" stroke="#c9d6ee" stroke-width="2.2"/><path d="M.6,2.6L6,4.4L2.2,8.2Z" fill="#c9d6ee"/></svg>
<svg class="abs" style="left:700px;top:538px" width="13" height="12" viewBox="0 0 13 12" ><path d="M10,5.6Q4.4,1.4 2.8,5.4Q2,9 6.4,11" fill="none" stroke="#cfe0ee" stroke-width="2.2"/><path d="M12.4,2.6L7,4.4L10.8,8.2Z" fill="#cfe0ee"/></svg>
</body>
</html>
